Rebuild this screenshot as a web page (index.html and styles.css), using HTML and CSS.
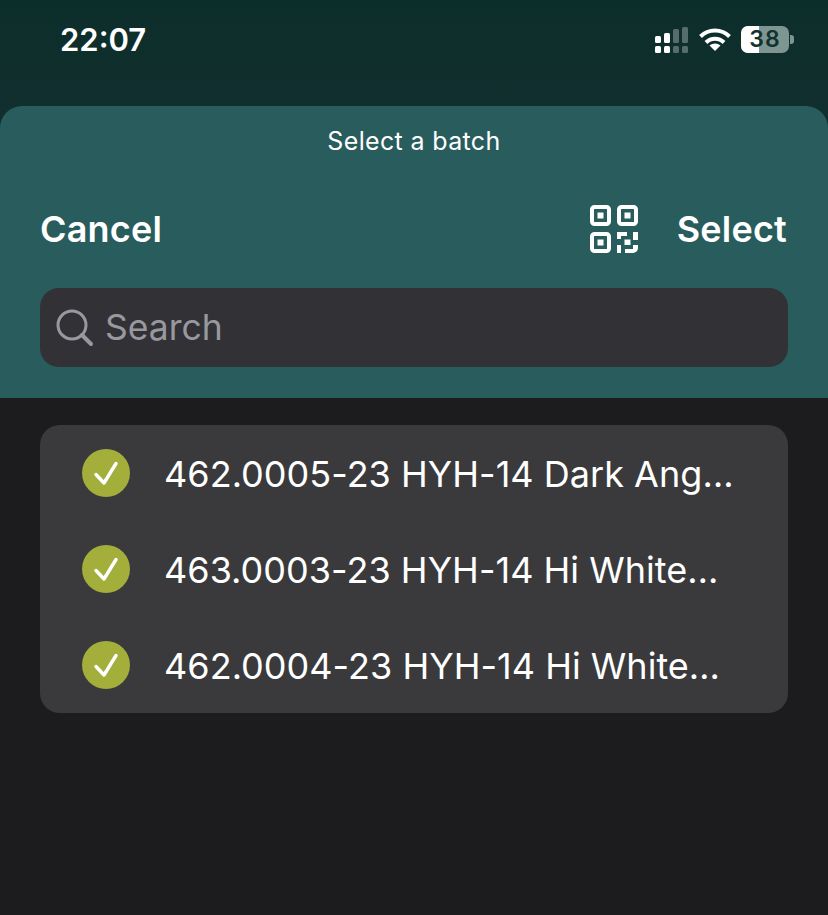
FILE: index.html
```html
<!DOCTYPE html>
<html lang="en">
<head>
<meta charset="utf-8">
<title>Select a batch</title>
<link rel="stylesheet" href="styles.css">
</head>
<body>
<div class="screen">
  <div class="status">
    <span class="time">22:07</span>
    <div class="status-icons">
      <svg class="signal" width="34" height="26" viewBox="0 0 34 26">
        <g fill="#fff">
          <rect x="0" y="9" width="6" height="7" rx="1.500"/>
          <rect x="0" y="19" width="6" height="7" rx="1.500"/>
          <rect x="9" y="6" width="6" height="10" rx="1.500"/>
          <rect x="9" y="19" width="6" height="7" rx="1.500"/>
        </g>
        <g fill="#fff" fill-opacity=".3">
          <rect x="18" y="2" width="6" height="14" rx="1.500"/>
          <rect x="18" y="19" width="6" height="7" rx="1.500"/>
          <rect x="27" y="0" width="6" height="16" rx="1.500"/>
          <rect x="27" y="19" width="6" height="7" rx="1.500"/>
        </g>
      </svg>
      <svg class="wifi" width="32" height="23" viewBox="0 0 32 23">
        <g fill="none" stroke="#fff" stroke-width="4">
          <path d="M1.500 8.500C9.500 .5 22.500 .5 30.500 8.500"/>
          <path d="M7 14.500C12 9.500 20 9.500 25 14.500"/>
        </g>
        <path d="M16 23l-5.500-5.500c3-2.800 8-2.800 11 0z" fill="#fff"/>
      </svg>
      <div class="battery">
        <div class="battery-body">
          <div class="battery-fill"></div>
          <span class="battery-num">38</span>
        </div>
        <div class="battery-tip"></div>
      </div>
    </div>
  </div>
  <div class="sheet">
    <div class="sheet-title">Select a batch</div>
    <div class="nav">
      <span class="nav-btn">Cancel</span>
      <div class="nav-right">
        <svg class="qr" width="48" height="48" viewBox="0 0 48 48">
          <g fill="none" stroke="#fff" stroke-width="4">
            <rect x="2" y="2" width="17" height="17" rx="2.500"/>
            <rect x="29" y="2" width="17" height="17" rx="2.500"/>
            <rect x="2" y="29" width="17" height="17" rx="2.500"/>
          </g>
          <g fill="#fff">
            <rect x="7.500" y="7.500" width="6" height="6"/>
            <rect x="34.500" y="7.500" width="6" height="6"/>
            <rect x="7.500" y="34.500" width="6" height="6"/>
            <rect x="27" y="27" width="10" height="4"/>
            <rect x="27" y="31" width="4" height="3"/>
            <rect x="43" y="27" width="5" height="8"/>
            <rect x="34.500" y="34.500" width="6" height="5.500"/>
            <rect x="27" y="40" width="4" height="8"/>
            <path d="M35 44h8v-4h5v3a5 5 0 0 1-5 5h-8z"/>
          </g>
        </svg>
        <span class="nav-btn">Select</span>
      </div>
    </div>
    <div class="search">
      <svg class="search-icon" width="38" height="38" viewBox="0 0 38 38">
        <circle cx="16" cy="16" r="14" fill="none" stroke="#98989f" stroke-width="3"/>
        <path d="M26 26l9 9" stroke="#98989f" stroke-width="4" stroke-linecap="round"/>
      </svg>
      <span class="search-text">Search</span>
    </div>
  </div>
  <div class="content">
    <ul class="list">
      <li class="row">
        <svg class="check" width="48" height="48" viewBox="0 0 48 48"><circle cx="24" cy="24" r="24" fill="#a4ae3a"/><path d="M14 25.500l8 8.500 12-19.500" fill="none" stroke="#fff" stroke-width="3.400" stroke-linecap="round" stroke-linejoin="round"/></svg>
        <span class="row-text">462.0005-23 HYH-14 Dark Ang…</span>
      </li>
      <li class="row">
        <svg class="check" width="48" height="48" viewBox="0 0 48 48"><circle cx="24" cy="24" r="24" fill="#a4ae3a"/><path d="M14 25.500l8 8.500 12-19.500" fill="none" stroke="#fff" stroke-width="3.400" stroke-linecap="round" stroke-linejoin="round"/></svg>
        <span class="row-text">463.0003-23 HYH-14 Hi White…</span>
      </li>
      <li class="row">
        <svg class="check" width="48" height="48" viewBox="0 0 48 48"><circle cx="24" cy="24" r="24" fill="#a4ae3a"/><path d="M14 25.500l8 8.500 12-19.500" fill="none" stroke="#fff" stroke-width="3.400" stroke-linecap="round" stroke-linejoin="round"/></svg>
        <span class="row-text">462.0004-23 HYH-14 Hi White…</span>
      </li>
    </ul>
  </div>
</div>
</body>
</html>
```
FILE: styles.css
```css
* { box-sizing: border-box; }
html, body { margin: 0; padding: 0; }
body {
  width: 828px;
  height: 915px;
  overflow: hidden;
  background: #1c1c1e;
  font-family: Inter, "Liberation Sans", sans-serif;
  color: #fff;
}
.screen {
  display: flex;
  flex-direction: column;
  height: 915px;
  background: linear-gradient(#0c2e2b, #112f2e 106px, #112f2e 135px, #1c1c1e 135px);
}
.status {
  height: 106px;
  flex: none;
  display: flex;
  justify-content: space-between;
  align-items: flex-start;
  padding: 0 34px 0 60px;
}
.time {
  margin-top: 21px;
  font-size: 31px;
  line-height: 38px;
  font-weight: 600;
}
.status-icons {
  display: flex;
  align-items: flex-start;
  margin-top: 26px;
}
.signal { margin-top: 1px; }
.wifi { margin: 2px 0 0 10px; }
.battery {
  display: flex;
  align-items: center;
  margin-left: 10px;
  height: 27px;
}
.battery-body {
  position: relative;
  width: 48px;
  height: 27px;
  border-radius: 7px;
  overflow: hidden;
  background: #7f9592;
}
.battery-fill {
  width: 18px;
  height: 100%;
  background: #fff;
}
.battery-num {
  position: absolute;
  inset: 0;
  text-align: center;
  font-size: 23px;
  line-height: 27px;
  font-weight: 600;
  letter-spacing: 1px;
  color: #123230;
}
.battery-tip {
  width: 4px;
  height: 9px;
  margin-left: 1px;
  border-radius: 0 3px 3px 0;
  background: #7f9592;
}
.sheet {
  flex: none;
  height: 292px;
  padding: 0 40px;
  background: #285c5d;
  border-radius: 22px 22px 0 0;
}
.sheet-title {
  padding-top: 20px;
  font-size: 25px;
  line-height: 30px;
  letter-spacing: .35px;
  text-align: center;
}
.nav {
  display: flex;
  justify-content: space-between;
  align-items: center;
  height: 50px;
  margin-top: 48px;
  padding-right: 1px;
}
.nav-btn {
  font-size: 36px;
  line-height: 50px;
  font-weight: 600;
  letter-spacing: .2px;
}
.nav-right {
  display: flex;
  align-items: center;
  gap: 39px;
}
.search {
  display: flex;
  align-items: center;
  height: 79px;
  margin-top: 34px;
  padding-left: 16px;
  border-radius: 19px;
  background: #323136;
}
.search-text {
  margin-left: 11px;
  font-size: 35.500px;
  color: #98989f;
}
.content {
  flex: 1;
  padding: 27px 40px 0;
  background: #1c1c1e;
}
.list {
  list-style: none;
  margin: 0;
  padding: 0;
  border-radius: 20px;
  background: #3a3a3c;
}
.row {
  display: flex;
  align-items: center;
  height: 96px;
  padding-left: 42px;
}
.row-text {
  margin-left: 34px;
  padding-top: 1px;
  font-size: 36px;
  letter-spacing: .03px;
  white-space: nowrap;
}
```
